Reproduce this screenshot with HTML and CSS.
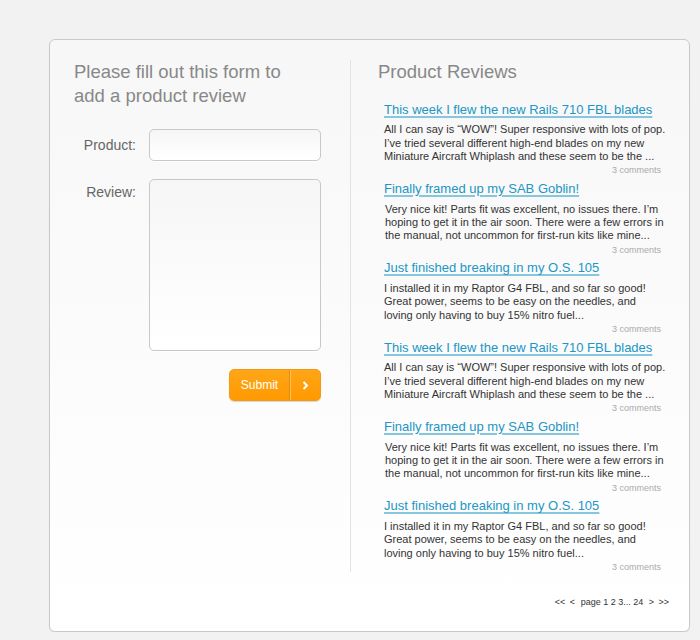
FILE: index.html
```html
<!DOCTYPE html>
<html lang="en">
<head>
<meta charset="utf-8">
<title>Product Reviews</title>
<link rel="stylesheet" href="styles.css">
</head>
<body>
<div class="card">
  <div class="columns">
    <section class="form-col">
      <h2 class="heading heading-form">Please fill out this form to add a product review</h2>
      <form class="review-form">
        <div class="row row-center">
          <label class="label" for="product">Product:</label>
          <input class="field" id="product" type="text">
        </div>
        <div class="row row-top">
          <label class="label label-top" for="review">Review:</label>
          <textarea class="field area" id="review"></textarea>
        </div>
        <div class="actions">
          <button type="button" class="submit">
            <span class="submit-text">Submit</span>
            <span class="submit-arrow"><svg width="7" height="9" viewBox="0 0 7 9"><path d="M1.5 1 L5 4.5 L1.5 8" fill="none" stroke="#fff" stroke-width="2"/></svg></span>
          </button>
        </div>
      </form>
    </section>
    <section class="reviews-col">
      <h2 class="heading">Product Reviews</h2>
      <ul class="reviews">
        <li class="review">
          <a class="title" href="#">This week I flew the new Rails 710 FBL blades</a>
          <p class="body">All I can say is “WOW”! Super responsive with lots of pop. I’ve tried several different high-end blades on my new Miniature Aircraft Whiplash and these seem to be the ...</p>
          <div class="comments">3 comments</div>
        </li>
        <li class="review">
          <a class="title" href="#">Finally framed up my SAB Goblin!</a>
          <p class="body indent">Very nice kit! Parts fit was excellent, no issues there. I’m hoping to get it in the air soon. There were a few errors in the manual, not uncommon for first-run kits like mine...</p>
          <div class="comments">3 comments</div>
        </li>
        <li class="review">
          <a class="title" href="#">Just finished breaking in my O.S. 105</a>
          <p class="body">I installed it in my Raptor G4 FBL, and so far so good! Great power, seems to be easy on the needles, and loving only having to buy 15% nitro fuel...</p>
          <div class="comments">3 comments</div>
        </li>
        <li class="review">
          <a class="title" href="#">This week I flew the new Rails 710 FBL blades</a>
          <p class="body">All I can say is “WOW”! Super responsive with lots of pop. I’ve tried several different high-end blades on my new Miniature Aircraft Whiplash and these seem to be the ...</p>
          <div class="comments">3 comments</div>
        </li>
        <li class="review">
          <a class="title" href="#">Finally framed up my SAB Goblin!</a>
          <p class="body indent">Very nice kit! Parts fit was excellent, no issues there. I’m hoping to get it in the air soon. There were a few errors in the manual, not uncommon for first-run kits like mine...</p>
          <div class="comments">3 comments</div>
        </li>
        <li class="review">
          <a class="title" href="#">Just finished breaking in my O.S. 105</a>
          <p class="body">I installed it in my Raptor G4 FBL, and so far so good! Great power, seems to be easy on the needles, and loving only having to buy 15% nitro fuel...</p>
          <div class="comments">3 comments</div>
        </li>
      </ul>
    </section>
  </div>
  <nav class="pager">
    <a href="#">&lt;&lt;</a> <a href="#">&lt;</a> <span class="pages">page 1 2 3... 24</span> <a href="#">&gt;</a> <a href="#">&gt;&gt;</a>
  </nav>
</div>
</body>
</html>
```
FILE: styles.css
```css
* { box-sizing: border-box; }
html, body { margin: 0; padding: 0; }
body {
  background: #f2f2f2;
  font-family: "Liberation Sans", Arial, Helvetica, sans-serif;
  padding: 39px 0 0 49px;
}
.card {
  width: 641px;
  height: 593px;
  border: 1px solid #c9c9c9;
  border-radius: 6px;
  background: linear-gradient(#f7f7f7, #ffffff);
  box-shadow: 0 1px 1px rgba(0,0,0,0.08);
  display: flex;
  flex-direction: column;
}
.columns {
  display: flex;
  padding-top: 20px;
}
.form-col {
  width: 300px;
  padding-left: 24px;
}
.heading {
  margin: 0;
  font-weight: normal;
  font-size: 18.5px;
  line-height: 23.5px;
  color: #888;
}
.heading-form {
  width: 225px;
}
.review-form {
  margin-top: 22px;
  display: flex;
  flex-direction: column;
  gap: 18px;
}
.row {
  display: flex;
  gap: 13px;
}
.row-center { align-items: center; }
.row-top { align-items: flex-start; }
.label {
  width: 62px;
  text-align: right;
  font-size: 14px;
  line-height: 16px;
  color: #666;
}
.label-top { padding-top: 5px; }
.field {
  width: 172px;
  height: 32px;
  border: 1px solid #c8c8c8;
  border-radius: 5px;
  background: linear-gradient(#f6f6f6, #ffffff);
  box-shadow: 0 1px 0 rgba(255,255,255,0.9);
  font: inherit;
  margin: 0;
  padding: 4px 6px;
}
.area {
  height: 172px;
  resize: none;
  display: block;
}
.actions {
  display: flex;
  justify-content: flex-end;
  width: 247px;
}
.submit {
  display: flex;
  width: 92px;
  height: 32px;
  padding: 0;
  border: 1px solid #f39a14;
  border-radius: 5px;
  background: linear-gradient(#ffa617, #ff9900);
  box-shadow: 0 1px 1px rgba(0,0,0,0.15);
  color: #fff;
  font-family: inherit;
  cursor: pointer;
  overflow: hidden;
}
.submit-text {
  width: 60px;
  height: 100%;
  display: flex;
  align-items: center;
  justify-content: center;
  font-size: 12px;
  border-right: 1px solid #e38a10;
}
.submit-arrow {
  flex: 1;
  height: 100%;
  display: flex;
  align-items: center;
  justify-content: center;
  border-left: 1px solid #ffc25a;
}
.submit-arrow svg { display: block; }
.reviews-col {
  border-left: 1px solid #e2e2e2;
  padding-left: 27px;
  width: 339px;
}
.reviews {
  list-style: none;
  margin: 16px 0 0;
  padding: 0 0 0 6px;
}
.review {
  width: 283px;
}
.review + .review {
  margin-top: 3.7px;
}
.title {
  display: inline-block;
  font-size: 13px;
  line-height: 17px;
  color: #2196c4;
  text-decoration: underline;
  text-decoration-color: #86c6df;
  text-decoration-thickness: 1.5px;
  text-underline-offset: 2px;
}
.body {
  margin: 5.8px 0 0;
  font-size: 11px;
  line-height: 13.33px;
  color: #333;
}
.body.indent { padding-left: 1px; }
.comments {
  margin-top: 2.9px;
  text-align: right;
  font-size: 9px;
  line-height: 9px;
  color: #aaa;
  padding-right: 6px;
}
.pager {
  margin-top: 24px;
  padding-right: 20px;
  text-align: right;
  font-size: 9px;
  line-height: 12px;
  color: #333;
  word-spacing: 2px;
}
.pager .pages {
  word-spacing: 0;
  margin: 0 1px;
}
.pager a {
  color: #333;
  text-decoration: none;
}
```
